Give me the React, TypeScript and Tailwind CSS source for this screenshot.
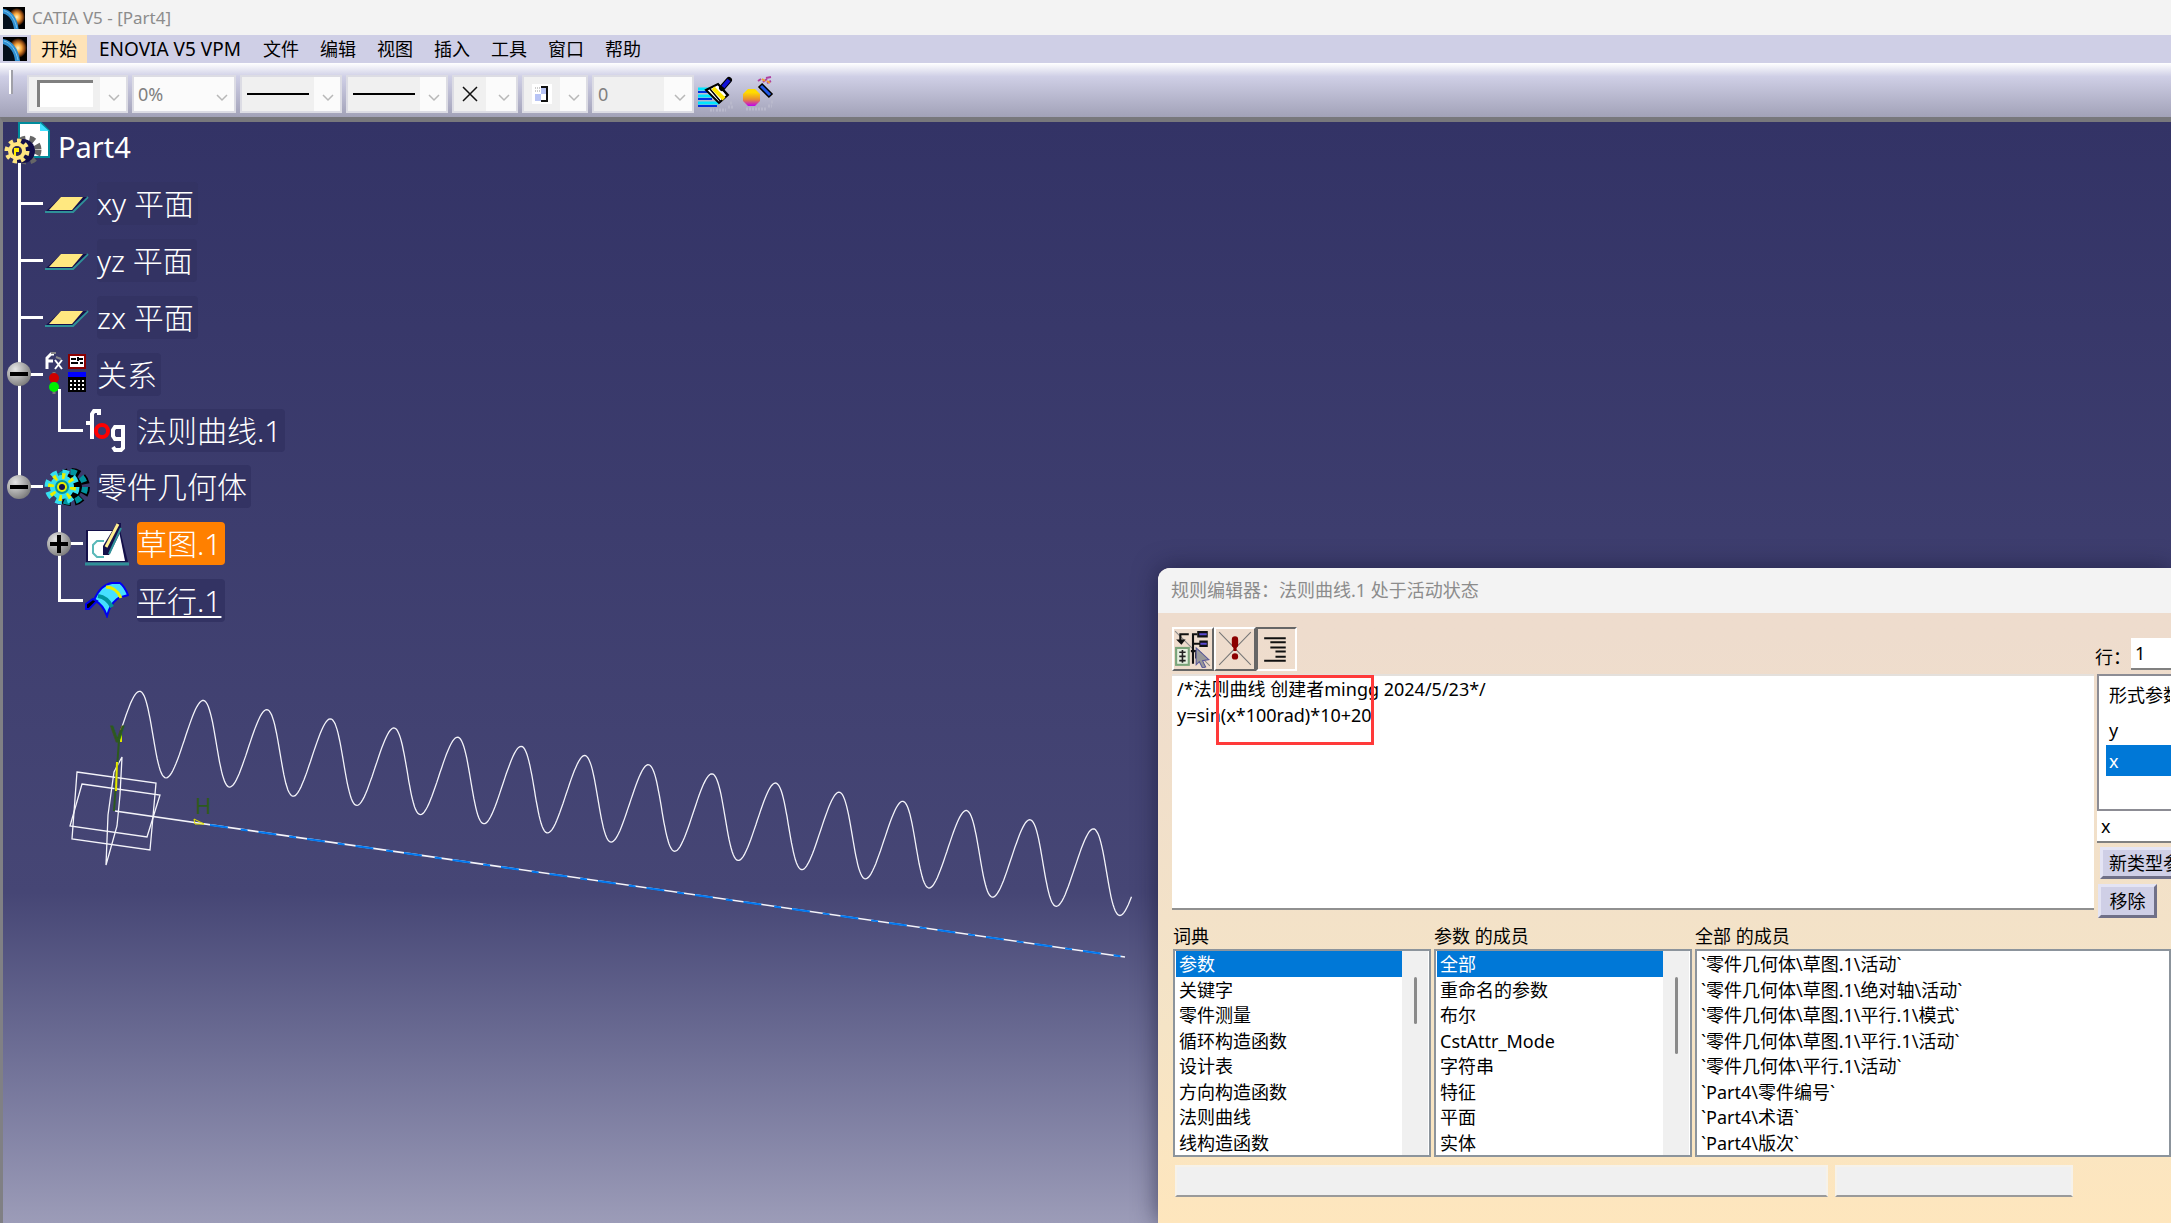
import type { ReactNode } from 'react';

const menus = ['文件', '编辑', '视图', '插入', '工具', '窗口', '帮助'];

const dictionary = ['参数', '关键字', '零件测量', '循环构造函数', '设计表', '方向构造函数', '法则曲线', '线构造函数'];

const parameterMembers = ['全部', '重命名的参数', '布尔', 'CstAttr_Mode', '字符串', '特征', '平面', '实体'];

const allMembers = [
   '`零件几何体\\草图.1\\活动`',
   '`零件几何体\\草图.1\\绝对轴\\活动`',
   '`零件几何体\\草图.1\\平行.1\\模式`',
   '`零件几何体\\草图.1\\平行.1\\活动`',
   '`零件几何体\\平行.1\\活动`',
   '`Part4\\零件编号`',
   '`Part4\\术语`',
   '`Part4\\版次`',
];

// y = sin(x * 100rad) * 10 + 20, drawn along the H axis of the sketch
const lawCurve = Array.from({ length: 801 }, (_, i) => {
   const t = i / 800;
   const value = Math.sin(t * 100) * 10 + 20;
   const x = 115 + 1012 * t + 0.3 * value;
   const y = 690 + 146 * t - 4.1 * value;
   return `${x.toFixed(1)},${y.toFixed(1)}`;
}).join(' ');

const Logo = ({ className }: { className: string }) => (
   <svg className={className} viewBox="0 0 24 24" aria-hidden="true">
      <defs>
         <radialGradient id="flare">
            <stop offset="0" stopColor="#fff3c0" />
            <stop offset="0.4" stopColor="#f7a63c" />
            <stop offset="0.75" stopColor="#8a4512" />
            <stop offset="1" stopColor="#000" />
         </radialGradient>
      </defs>
      <rect width="24" height="24" fill="#000" />
      <ellipse cx="15" cy="11" rx="9" ry="10" fill="url(#flare)" />
      <path d="M0 5C9 6 14 14 15 24H0z" fill="#04101c" />
      <path d="M0 2C9 3 16 12 17 24h-5C11 15 7 9 0 7z" fill="#2f8fd0" />
      <path d="M1 4C8 6 13 13 15 23" fill="none" stroke="#7cc4f0" strokeWidth="1" />
   </svg>
);

const Chevron = () => (
   <svg className="pointer-events-none absolute top-1/2 right-1.5 h-2 w-3" viewBox="0 0 12 8" aria-hidden="true">
      <path d="M1 1l5 5 5-5" fill="none" stroke="#b8b8b8" strokeWidth="1.5" />
   </svg>
);

type ComboProps = { label: string; value?: string; width: string; fill?: string; children?: ReactNode };

const Combo = ({ label, value = '', width, fill = '', children }: ComboProps) => (
   <div className={`relative h-[38px] border-2 border-[#dcdce4] bg-[#fbfbfb] ${width}`}>
      {children && (
         <div className={`pointer-events-none absolute inset-y-0 left-0 flex items-center justify-center bg-[#f0f0f0] ${fill}`}>
            {children}
         </div>
      )}
      <select
         aria-label={label}
         className="relative block h-full w-full appearance-none bg-transparent pl-1 text-lg leading-6 text-[#808080] outline-none"
      >
         <option>{value}</option>
      </select>
      <Chevron />
   </div>
);

const Toolbar = () => (
   <div className="flex h-[54px] shrink-0 items-center gap-1 bg-linear-to-b from-white via-[#cfcfe6] via-25% to-[#a2a2b8] pt-[7px] pl-[9px]">
      <div className="mr-[10px] mb-6 h-6 w-1 border-r-2 border-[#a0a0a8] bg-white" />
      <Combo label="填充颜色" width="w-[101px]" fill="w-[71px]">
         <div className="h-[27px] w-14 border-t-3 border-l-3 border-[#808080] bg-white" />
      </Combo>
      <Combo label="透明度" value="0%" width="w-[104px]" />
      <Combo label="线宽" width="w-[102px]" fill="w-[72px]">
         <div className="h-0.5 w-[62px] bg-black" />
      </Combo>
      <Combo label="线型" width="w-[102px]" fill="w-[72px]">
         <div className="h-0.5 w-[62px] bg-black" />
      </Combo>
      <Combo label="点符号" width="w-[66px]" fill="w-8">
         <svg className="h-4 w-4" viewBox="0 0 16 16">
            <path d="M1 1l14 14M15 1L1 15" stroke="#111" strokeWidth="1.5" />
         </svg>
      </Combo>
      <Combo label="渲染样式" width="w-[66px]" fill="w-9">
         <svg className="h-5 w-5" viewBox="0 0 20 20">
            <rect width="20" height="20" fill="#fff" />
            <path d="M3 10h6v7H3zM9 3h5v7H9z" fill="#b8c4f5" />
            <path d="M3 4h5M3 7h5" stroke="#999" strokeDasharray="1 1" />
            <path d="M9 3h6v14H9" fill="none" stroke="#111" strokeWidth="2" />
         </svg>
      </Combo>
      <Combo label="图层" value="0" width="w-[102px]" fill="w-[70px]">
         <span />
      </Combo>
      <button aria-label="格式刷">
         <svg className="h-9 w-9" viewBox="0 0 36 36">
            <path d="M12 34h4m2 0h10m2-3h5m-3-4h3" stroke="#b9b9cc" strokeWidth="3" strokeDasharray="2 1" />
            <path d="M0 13h14M0 20h18M0 27h21" stroke="#00e5ff" strokeWidth="3" />
            <path d="M0 16h12M0 23h14M0 30h19" stroke="#0030e0" strokeWidth="2" />
            <path d="M8 14l12-6 10 11-9 8z" fill="#fff" stroke="#000" strokeWidth="2" />
            <path d="M12 13l11 13M20 8l9 11" stroke="#000" strokeWidth="1.5" />
            <path d="M15 12l11 11" stroke="#ffe600" strokeWidth="4" />
            <path d="M24 12l7-8" stroke="#000" strokeWidth="6" strokeLinecap="round" />
            <path d="M25 11l6-7" stroke="#1010d8" strokeWidth="4" />
         </svg>
      </button>
      <button aria-label="图形属性向导" className="ml-1">
         <svg className="h-9 w-9" viewBox="0 0 36 36">
            <defs>
               <linearGradient id="ball" x1="0" y1="0" x2="0" y2="1">
                  <stop offset="0.2" stopColor="#ffdc00" />
                  <stop offset="0.6" stopColor="#e89030" />
                  <stop offset="1" stopColor="#c000f0" />
               </linearGradient>
            </defs>
            <path d="M4 33h20m2-3h4m-1-4h3" stroke="#b9b9cc" strokeWidth="3" strokeDasharray="2 1" />
            <path d="M6 13h7l5 5v7l-5 5H6l-5-5v-7z" fill="url(#ball)" />
            <path d="M18 9l11 11" stroke="#000" strokeWidth="6" />
            <path d="M19 10l9 9" stroke="#2058e8" strokeWidth="3" />
            <path d="M16 5l3-2m2 3l4-3m0 4l4-2m-5-3l5-1" stroke="#b040a0" strokeWidth="2" />
            <path d="M20 3l3 2m2 0l3 2" stroke="#f0a030" strokeWidth="2" />
         </svg>
      </button>
   </div>
);

const PartIcon = () => (
   <svg className="h-[46px] w-12 overflow-visible" viewBox="0 0 48 46" aria-hidden="true">
      <path d="M16 1h22l8 8v26H16z" fill="#fff" stroke="#008c9c" strokeWidth="2" />
      <path d="M37 1v8h9z" fill="#40e0ff" />
      <circle cx="24" cy="28" r="11" fill="none" stroke="#666" strokeWidth="7" strokeDasharray="5 4" />
      <circle cx="20" cy="29" r="12" fill="#14104a" />
      <circle cx="14" cy="29" r="9" fill="#ffe680" />
      <circle cx="14" cy="29" r="10" fill="none" stroke="#ffe680" strokeWidth="5" strokeDasharray="4 3.8" />
      <circle cx="14" cy="29" r="5" fill="#2b2850" />
      <path d="M11 26h5v4h-3v4h-2z" fill="#ffee00" />
      <path d="M16.500 41v12" stroke="#fff" strokeWidth="3" />
   </svg>
);

const PlaneIcon = () => (
   <svg className="h-5 w-11" viewBox="0 0 44 20" aria-hidden="true">
      <path d="M0 18h28L43 3" fill="none" stroke="#2f9098" strokeWidth="2" />
      <path d="M1 17L16 3h26L27 17z" fill="#14104a" />
      <path d="M4 16L16 3h22L27 16z" fill="#ffe880" />
   </svg>
);

const RelationsIcon = () => (
   <svg className="h-11 w-11 overflow-visible" viewBox="0 0 44 44" aria-hidden="true">
      <path d="M2 17V6l4-4h3M2 9h6" fill="none" stroke="#fff" strokeWidth="3" />
      <path d="M10 8l7 9M17 8l-7 9" stroke="#fff" strokeWidth="2" />
      <path d="M6 1h5M11 5l5 2" stroke="#888" strokeWidth="2" />
      <rect x="24" y="3" width="16" height="13" fill="#fff" stroke="#8b0000" strokeWidth="2" />
      <path d="M26 7h5M33 7h5M26 11h7M35 11h3M33 5v4" stroke="#000" strokeWidth="2" />
      <path d="M9 20v22" stroke="#777" strokeWidth="3" />
      <circle cx="9" cy="26" r="5" fill="#c00" />
      <circle cx="9" cy="35" r="5" fill="#0e0" />
      <rect x="23" y="20" width="18" height="20" fill="#000" />
      <rect x="23" y="20" width="18" height="5" fill="#00f" />
      <path d="M25 29h14M25 33h14M25 37h14" stroke="#fff" strokeWidth="2" strokeDasharray="2 2" />
      <path d="M14.500 37v14" stroke="#fff" strokeWidth="3" />
   </svg>
);

const LawIcon = () => (
   <svg className="h-11 w-11" viewBox="0 0 44 44" aria-hidden="true">
      <path d="M14 7V3H9L7 6v25M1 15h8" fill="none" stroke="#fff" strokeWidth="4" />
      <circle cx="17" cy="23" r="6" fill="none" stroke="#f00" strokeWidth="4" />
      <path d="M38 18v22l-2 2h-6l-2-3M38 31h-8l-2-3v-6l2-3h10" fill="none" stroke="#fff" strokeWidth="4" />
   </svg>
);

const BodyIcon = () => (
   <svg className="h-11 w-11 overflow-visible" viewBox="0 0 44 44" aria-hidden="true">
      <circle cx="24" cy="22" r="13" fill="#000" />
      <circle cx="26" cy="22" r="15" fill="none" stroke="#000" strokeWidth="8" strokeDasharray="8 3.8" />
      <circle cx="25" cy="22" r="15" fill="none" stroke="#00949e" strokeWidth="6" strokeDasharray="6 5.800" />
      <circle cx="17" cy="22" r="12" fill="#35dff0" />
      <circle cx="17" cy="22" r="14" fill="none" stroke="#35dff0" strokeWidth="7" strokeDasharray="6 5" />
      <circle cx="17" cy="22" r="11" fill="none" stroke="#e8f000" strokeWidth="6" strokeDasharray="3 5.600" />
      <circle cx="17" cy="22" r="7" fill="#00949e" />
      <circle cx="17" cy="22" r="5" fill="#e8f000" />
      <circle cx="17" cy="22" r="3" fill="#14104a" />
      <path d="M14.500 40v11" stroke="#fff" strokeWidth="3" />
   </svg>
);

const SketchIcon = () => (
   <svg className="h-11 w-11" viewBox="0 0 44 44" aria-hidden="true">
      <path d="M1 8h34l8 32H1z" fill="#14104a" />
      <path d="M3 9h31l6 30H3z" fill="#fff" />
      <path d="M0 42h44" stroke="#2f9098" strokeWidth="3" />
      <path d="M19 19h-7l-4 4v8l4 4h7" fill="none" stroke="#59b8b8" strokeWidth="2" />
      <path d="M32 1h4v8L24 33h-6v-9z" fill="#14104a" />
      <path d="M33 2L21 25" stroke="#ffee90" strokeWidth="3" />
      <path d="M36 6L24 32" stroke="#2f9098" strokeWidth="2" />
   </svg>
);

const OffsetIcon = () => (
   <svg className="h-9 w-11" viewBox="0 0 44 36" aria-hidden="true">
      <path
         d="M9 18C13 9 19 2 27 1h8c4 3 6 7 8 12-4 2-8 1-11 4-5 4-8 9-10 17-2-6-5-12-13-16z"
         fill="#45e0ff"
         stroke="#0000f0"
         strokeWidth="2"
      />
      <path d="M1 27v-5l7-5 4 2-8 8z" fill="#000" stroke="#0000f0" strokeWidth="2" />
      <path d="M13 14c7 1 11 5 14 11" fill="none" stroke="#00949e" strokeWidth="4" />
      <path d="M21 5c7 0 12 4 15 11" fill="none" stroke="#e8f000" strokeWidth="3" />
   </svg>
);

const Toggle = ({ open }: { open: boolean }) => (
   <button
      aria-label={open ? '折叠' : '展开'}
      className="absolute top-1/2 left-1 flex h-6 w-6 -translate-y-1/2 items-center justify-center rounded-full bg-radial-[at_35%_30%] from-[#e6e6e6] via-[#a0a0a0] to-[#5c5c5c]"
   >
      <svg className="h-[18px] w-[18px]" viewBox="0 0 18 18">
         <path d={open ? 'M0 9h18' : 'M0 9h18M9 0v18'} stroke="#000" strokeWidth="4" />
      </svg>
   </button>
);

type BranchProps = { up?: boolean; down?: boolean; out?: boolean; toggle?: 'open' | 'closed' };

// One indent step: upper and lower half of the trunk, with an optional branch
const Branch = ({ up = true, down = true, out = true, toggle }: BranchProps) => (
   <div className="relative flex w-10 shrink-0 flex-col self-stretch pl-[15px]">
      <div className={`flex-1 border-white ${up ? 'border-l-3' : ''} ${out ? 'border-b-3' : ''}`} />
      <div className={`flex-1 border-white ${down ? 'border-l-3' : ''}`} />
      {toggle && <Toggle open={toggle === 'open'} />}
   </div>
);

type RowProps = { icon: ReactNode; label: string; height?: string; look?: string; children: ReactNode };

const TreeRow = ({ icon, label, height = 'h-[57px]', look = 'bg-[#333363]', children }: RowProps) => (
   <li className={`flex items-center ${height}`}>
      {children}
      <span className="flex w-[54px] shrink-0 pl-0.5">{icon}</span>
      <span className={`h-[43px] rounded-sm pr-1 text-[30px] leading-[43px] font-light ${look}`}>{label}</span>
   </li>
);

const SpecTree = () => (
   <ul className="relative w-fit text-white">
      <li className="flex h-[53px] items-start gap-[7px]">
         <PartIcon />
         <span className="text-[29px] leading-[50px]">Part4</span>
      </li>
      <TreeRow icon={<PlaneIcon />} label="xy 平面">
         <Branch />
      </TreeRow>
      <TreeRow icon={<PlaneIcon />} label="yz 平面">
         <Branch />
      </TreeRow>
      <TreeRow icon={<PlaneIcon />} label="zx 平面">
         <Branch />
      </TreeRow>
      <TreeRow icon={<RelationsIcon />} label="关系" height="h-14">
         <Branch toggle="open" />
      </TreeRow>
      <TreeRow icon={<LawIcon />} label="法则曲线.1" height="h-14">
         <Branch out={false} />
         <Branch down={false} />
      </TreeRow>
      <TreeRow icon={<BodyIcon />} label="零件几何体">
         <Branch down={false} toggle="open" />
      </TreeRow>
      <TreeRow icon={<SketchIcon />} label="草图.1" look="bg-[#ff8000]">
         <Branch up={false} down={false} out={false} />
         <Branch toggle="closed" />
      </TreeRow>
      <TreeRow icon={<OffsetIcon />} label="平行.1" height="h-14" look="bg-[#333363] underline decoration-2 underline-offset-4">
         <Branch up={false} down={false} out={false} />
         <Branch down={false} />
      </TreeRow>
   </ul>
);

const Geometry = () => (
   <svg className="absolute top-0 left-0 h-[900px] w-[1150px]" viewBox="3 0 1150 900" fill="none" aria-label="草图几何体">
      <g stroke="#f4f4fa" strokeWidth="1.3">
         <polyline points={lawCurve} />
         <path d="M77 650l79 11-6 67-78-11z" />
         <path d="M82 662l78 11-13 42-77-11z" />
         <path d="M122 635l-2 38-3 31-11 39 2-50 6-43z" />
         <path d="M115 689L1125 835" strokeWidth="1.6" />
      </g>
      <path d="M210 703L1125 835" stroke="#0078f0" strokeWidth="2" strokeDasharray="18 13 7 11" />
      <path d="M114 689l5-71" stroke="#2c5a1e" strokeWidth="2" />
      <path d="M116 669l1-29M121 620v-9" stroke="#e6e600" strokeWidth="2" />
      <path d="M194 697l10 5h-9z" stroke="#e6e600" />
      <g stroke="#2c5a1e" fill="#2c5a1e" fontSize="22">
         <text x="111" y="620">V</text>
         <text x="195" y="692" stroke="none">H</text>
      </g>
   </svg>
);

type ListProps = { id: string; title: string; items: string[]; selected?: boolean; width: string; thumb?: string };

const MemberList = ({ id, title, items, selected = true, width, thumb }: ListProps) => (
   <div className={width}>
      <h3 id={id} className="h-[30px] text-lg leading-[34px]">{title}</h3>
      <div className="flex border-2 border-[#8c949c] bg-white px-px">
         <ul role="listbox" aria-labelledby={id} className="grid h-[204px] min-w-0 flex-1 grid-rows-8">
            {items.map((item, i) => (
               <li
                  key={item}
                  role="option"
                  aria-selected={selected && i === 0}
                  className={`truncate pl-[3px] text-lg leading-[27px] ${selected && i === 0 ? 'bg-[#0078d7] text-white' : ''}`}
               >
                  {item}
               </li>
            ))}
         </ul>
         {thumb && (
            <div className="w-[26px] bg-[#f0f0f0] pt-[26px]">
               <div className={`mx-auto w-[3px] rounded-full bg-[#8a8a8a] ${thumb}`} />
            </div>
         )}
      </div>
   </div>
);

const RuleEditor = () => (
   <section className="absolute top-[446px] right-0 bottom-0 left-[1155px] flex flex-col overflow-hidden rounded-tl-xl bg-linear-to-b from-[#eedccd] from-10% via-[#f5e4c6] via-70% to-[#fee6bd] shadow-[0_0_24px_rgba(20,20,50,0.6)]">
      <h2 className="h-[45px] shrink-0 bg-[#f3f3f3] pl-[13px] text-lg leading-[44px] text-[#8c8c8c]">规则编辑器：法则曲线.1 处于活动状态</h2>
      <div className="flex flex-col pt-[14px] pl-[14px]">
         <div className="flex h-[47px] items-start">
            <button aria-label="插入特征" className="h-11 w-[42px] border-2 border-t-white border-r-[#666] border-b-[#666] border-l-white">
               <svg viewBox="0 0 36 36">
                  <path d="M1 1l33 33" stroke="#888" />
                  <path d="M6 10V4h8M18 32V4h4M18 13h8M16 20h8" fill="none" stroke="#111" strokeWidth="2" />
                  <path d="M2 9h9l-4 5z" fill="#111" />
                  <path d="M22 4h10M24 13h8M20 24h6" stroke="#111" strokeWidth="6" />
                  <path d="M24 4h7M25 13h6" stroke="#5a4ad0" strokeWidth="2" />
                  <rect x="2" y="17" width="12" height="16" fill="#e7f0e0" stroke="#7aa47a" strokeWidth="2" />
                  <path d="M5 21h6M5 25h6M5 29h6M8 19v12" stroke="#222" strokeWidth="1.5" />
                  <path d="M21 17l12 11-6 1 3 6-3 1-3-6-3 3z" fill="#999" stroke="#5a5a9a" />
               </svg>
            </button>
            <button aria-label="检查语法" className="h-11 w-[42px] border-2 border-t-white border-r-[#666] border-b-[#666] border-l-white">
               <svg viewBox="0 0 36 36">
                  <path d="M3 2l30 31M33 2L3 33" stroke="#777" />
                  <path d="M18 9v5" stroke="#8b0000" strokeWidth="6" strokeLinecap="round" />
                  <path d="M18 14v6" stroke="#8b0000" strokeWidth="3" />
                  <circle cx="18" cy="25" r="3" fill="#8b0000" />
               </svg>
            </button>
            <button aria-label="缩进" className="h-11 w-[41px] border-2 border-t-[#666] border-r-white border-b-white border-l-[#666]">
               <svg viewBox="0 0 36 36">
                  <path d="M6 7h21M12 11h15M12 16h15M17 20h10M17 25h10M6 29h21" stroke="#111" strokeWidth="2" />
               </svg>
            </button>
            <label htmlFor="line" className="mt-4 ml-auto text-lg leading-7">行：</label>
            <input id="line" defaultValue="1" className="mt-[11px] h-8 w-10 border-b-2 border-[#808080] bg-white pl-1 text-lg outline-none" />
         </div>
         <div className="flex h-[245px] gap-[3px]">
            <div className="relative h-[236px] min-w-0 flex-1">
               <textarea
                  aria-label="规则正文"
                  className="block h-full w-full resize-none border-t-2 border-b-2 border-t-[#e4e0dc] border-b-[#909090] bg-white px-[5px] text-lg leading-[26px] outline-none"
                  defaultValue={'/*法则曲线 创建者mingg 2024/5/23*/\ny=sin(x*100rad)*10+20'}
               />
               <div className="pointer-events-none absolute top-px left-11 h-[70px] w-[158px] border-3 border-[#ff3a3a]" />
            </div>
            <div className="flex w-[74px] shrink-0 flex-col overflow-hidden whitespace-nowrap">
               <div className="h-[137px] shrink-0 border-2 border-r-0 border-[#8c8c94] bg-white pl-[7px] text-lg">
                  <table className="w-full">
                     <thead>
                        <tr>
                           <th className="block h-[38px] w-16 overflow-hidden pl-[3px] text-left leading-[38px] font-normal">形式参数</th>
                        </tr>
                     </thead>
                     <tbody>
                        <tr>
                           <td className="h-[31px] pl-[3px]">y</td>
                        </tr>
                        <tr className="bg-[#0078d7] text-white">
                           <td className="h-[31px] pl-[3px]">x</td>
                        </tr>
                     </tbody>
                  </table>
               </div>
               <input aria-label="参数名称" defaultValue="x" className="h-8 shrink-0 border-b-2 border-[#808080] bg-white pl-1 text-lg outline-none" />
               <button className="mt-1 ml-[3px] h-8 w-32 shrink-0 border-3 border-t-[#e4e4f4] border-r-[#707088] border-b-[#707088] border-l-[#e4e4f4] bg-[#cfcfe6] pl-1.5 text-left text-lg leading-6">
                  新类型参数
               </button>
               <button className="mt-[5px] ml-px h-[34px] w-[59px] shrink-0 border-3 border-t-[#e4e4f4] border-r-[#707088] border-b-[#707088] border-l-[#e4e4f4] bg-[#cfcfe6] text-lg leading-6">
                  移除
               </button>
            </div>
         </div>
         <div className="flex gap-[3px] pl-px">
            <MemberList id="dictionary" title="词典" items={dictionary} width="w-[258px]" thumb="h-[47px]" />
            <MemberList id="members" title="参数 的成员" items={parameterMembers} width="w-[258px]" thumb="h-[77px]" />
            <MemberList id="all" title="全部 的成员" items={allMembers} selected={false} width="min-w-0 flex-1" />
         </div>
         <div className="mt-2 flex gap-[7px] pl-[3px]">
            <input aria-label="说明" readOnly className="h-8 w-[653px] border-2 border-t-[#f6f2ea] border-r-[#f6f2ea] border-b-[#9a9a9a] border-l-[#f6f2ea] bg-[#f0f0f0] outline-none" />
            <input aria-label="值" readOnly className="h-8 w-[238px] border-2 border-t-[#f6f2ea] border-r-[#f6f2ea] border-b-[#9a9a9a] border-l-[#f6f2ea] bg-[#f0f0f0] outline-none" />
         </div>
      </div>
   </section>
);

const App = () => {
   return (
      <div className="flex h-screen flex-col overflow-hidden bg-[#cfcfe6] font-['Noto_Sans','Noto_Sans_CJK_SC',sans-serif] text-black">
         <header className="flex h-[35px] shrink-0 items-center gap-[7px] bg-[#f3f3f3] pl-[3px]">
            <Logo className="h-[22px] w-[22px]" />
            <h1 className="text-[17px] leading-6 text-[#8c8c8c]">CATIA V5 - [Part4]</h1>
         </header>
         <nav className="flex h-7 shrink-0 items-center gap-px bg-[#cfcfe6]">
            <Logo className="mx-px h-6 w-7" />
            <button className="h-7 bg-[#fee3b8] px-[10px] text-lg leading-6">开始</button>
            <button className="h-7 w-[164px] text-[19px] leading-6">ENOVIA V5 VPM</button>
            {menus.map((menu) => (
               <button key={menu} className="h-7 px-[10px] text-lg leading-6">
                  {menu}
               </button>
            ))}
         </nav>
         <Toolbar />
         <main className="relative min-h-0 flex-1 border-t-5 border-l-3 border-t-[#78787c] border-l-[#808084] bg-linear-to-b from-[#333366] via-[#464675] via-70% to-[#9c9cb8]">
            <Geometry />
            <SpecTree />
            <RuleEditor />
         </main>
      </div>
   );
};

export default App;
